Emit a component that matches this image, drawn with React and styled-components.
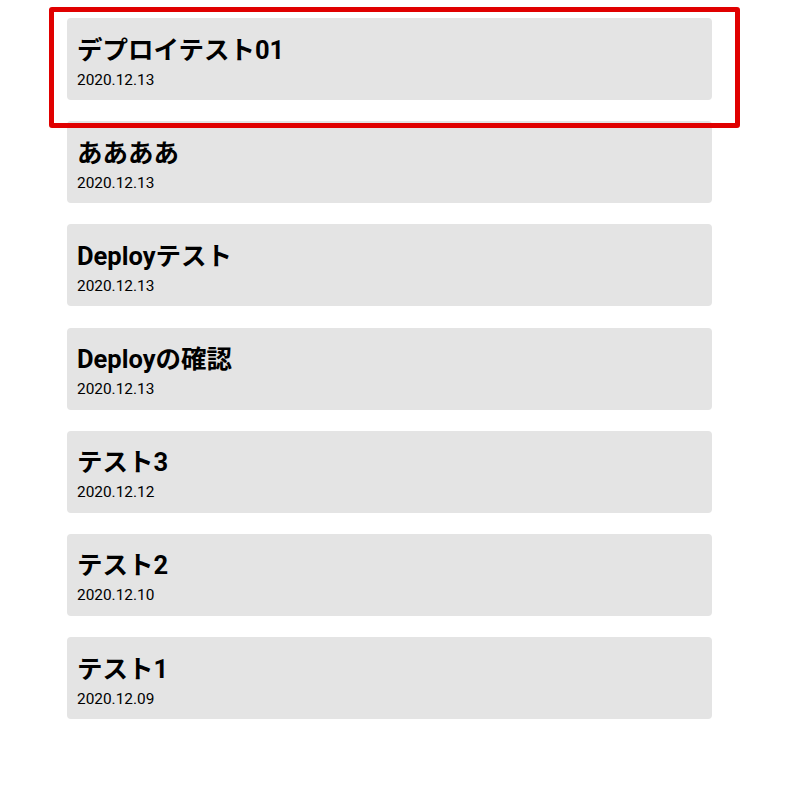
import React from "react";
import styled, { createGlobalStyle } from "styled-components";

const GlobalStyle = createGlobalStyle`
  html, body {
    margin: 0;
    padding: 0;
    background: #fff;
    font-family: Roboto, "Noto Sans CJK JP", sans-serif;
    color: #000;
  }
`;

const Page = styled.main`
  position: relative;
  padding: 18px 0 0 67px;
  width: 645px;
`;

const List = styled.ul`
  list-style: none;
  margin: 0;
  padding: 0;
  display: flex;
  flex-direction: column;
  gap: 21.2px;
`;

const Card = styled.li`
  box-sizing: border-box;
  height: 82px;
  padding: 13.5px 10px 0;
  background: #e4e4e4;
  border-radius: 4px;
`;

const Title = styled.h2`
  margin: 0;
  font-size: 25.5px;
  font-weight: 700;
  line-height: 37px;
  color: #000;
`;

const Date = styled.p`
  margin: 0;
  font-size: 15.4px;
  line-height: 22.6px;
  color: #000;
`;

const Highlight = styled.div`
  position: absolute;
  left: 49px;
  top: 7px;
  width: 691px;
  height: 121px;
  box-sizing: border-box;
  border: 5px solid #e00000;
  border-radius: 3px;
  pointer-events: none;
`;

const posts = [
  { title: "デプロイテスト01", date: "2020.12.13" },
  { title: "ああああ", date: "2020.12.13" },
  { title: "Deployテスト", date: "2020.12.13" },
  { title: "Deployの確認", date: "2020.12.13" },
  { title: "テスト3", date: "2020.12.12" },
  { title: "テスト2", date: "2020.12.10" },
  { title: "テスト1", date: "2020.12.09" },
];

const App = () => {
  return (
    <>
      <GlobalStyle />
      <Page>
        <List>
          {posts.map((post) => (
            <Card key={post.title}>
              <Title>{post.title}</Title>
              <Date>{post.date}</Date>
            </Card>
          ))}
        </List>
      </Page>
      <Highlight />
    </>
  );
};

export default App;
